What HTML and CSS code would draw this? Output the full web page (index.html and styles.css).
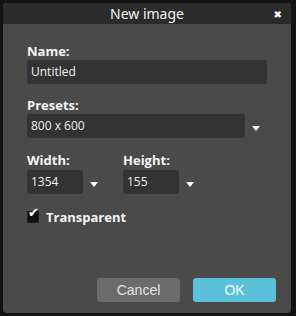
FILE: index.html
```html
<!DOCTYPE html>
<html lang="en">
<head>
    <meta charset="UTF-8">
    <title>New image</title>
    <link rel="stylesheet" href="styles.css">
</head>
<body>
    <div class="dialog">
        <div class="dialog-header">
            <span class="dialog-title">New image</span>
            <span class="close-btn">&#x2716;</span>
        </div>
        <div class="dialog-body">
            <label class="field-label">Name:</label>
            <div class="text-input wide">Untitled</div>

            <label class="field-label">Presets:</label>
            <div class="select-row">
                <div class="text-input presets">800 x 600</div>
                <span class="arrow"></span>
            </div>

            <div class="size-row">
                <div class="size-field">
                    <label class="field-label">Width:</label>
                    <div class="select-row">
                        <div class="text-input small">1354</div>
                        <span class="arrow"></span>
                    </div>
                </div>
                <div class="size-field">
                    <label class="field-label">Height:</label>
                    <div class="select-row">
                        <div class="text-input small">155</div>
                        <span class="arrow"></span>
                    </div>
                </div>
            </div>

            <div class="check-row">
                <span class="checkbox"><span class="tick">&#x2714;</span></span>
                <span class="check-label">Transparent</span>
            </div>

            <div class="buttons">
                <button class="btn cancel">Cancel</button>
                <button class="btn ok">OK</button>
            </div>
        </div>
    </div>
</body>
</html>
```

FILE: styles.css
```css
* {
    margin: 0;
    padding: 0;
    box-sizing: border-box;
}

body {
    background-color: #131313;
    padding: 3px 5px 3px 3px;
    font-family: 'Open Sans', 'DejaVu Sans', sans-serif;
}

.dialog {
    width: 288px;
    height: 310px;
    background-color: #4a4a4b;
    border-radius: 4px;
    overflow: hidden;
    display: flex;
    flex-direction: column;
}

.dialog-header {
    height: 21px;
    background-color: #2b2b2b;
    display: flex;
    align-items: center;
    justify-content: center;
    position: relative;
}

.dialog-title {
    color: #f2f2f2;
    font-size: 14px;
    font-family: 'Noto Sans', sans-serif;
}

.close-btn {
    position: absolute;
    right: 9px;
    top: 4px;
    color: #fff;
    font-size: 10px;
    font-weight: bold;
}

.dialog-body {
    flex: 1;
    padding: 18px 15px 11px 24px;
    display: flex;
    flex-direction: column;
}

.field-label {
    display: block;
    color: #f5f5f5;
    font-size: 13px;
    font-weight: bold;
    line-height: 18px;
}

.text-input {
    background-color: #333334;
    border-radius: 3px;
    height: 24px;
    color: #f0f0f0;
    font-size: 12px;
    line-height: 24px;
    padding-left: 4px;
}

.wide {
    width: 240px;
    margin-bottom: 12px;
}

.select-row {
    display: flex;
    align-items: center;
}

.presets {
    width: 218px;
}

.small {
    width: 56px;
}

.arrow {
    width: 0;
    height: 0;
    border-left: 4px solid transparent;
    border-right: 4px solid transparent;
    border-top: 5px solid #fff;
    margin-left: 7px;
    margin-top: 4px;
}

.size-row {
    display: flex;
    gap: 25px;
    margin-top: 13px;
}

.size-row .field-label {
    margin-bottom: 1px;
}

.check-row {
    display: flex;
    align-items: center;
    margin-top: 14px;
}

.checkbox {
    width: 12px;
    height: 12px;
    background-color: #111;
    border: 1px solid #222;
    position: relative;
}

.tick {
    position: absolute;
    left: 0;
    top: -7px;
    color: #fff;
    font-size: 13px;
    font-family: 'DejaVu Sans', sans-serif;
}

.check-label {
    color: #f5f5f5;
    font-size: 13px;
    font-weight: bold;
    margin-left: 7px;
}

.buttons {
    margin-top: auto;
    display: flex;
    justify-content: flex-end;
    gap: 13px;
}

.btn {
    width: 83px;
    height: 24px;
    border: none;
    border-radius: 3px;
    font-family: 'Liberation Sans', sans-serif;
    font-size: 14px;
}

.cancel {
    background-color: #6b6b6b;
    color: #e2e2e2;
}

.ok {
    background-color: #5bc1d9;
    color: #f5fbfd;
}
```
